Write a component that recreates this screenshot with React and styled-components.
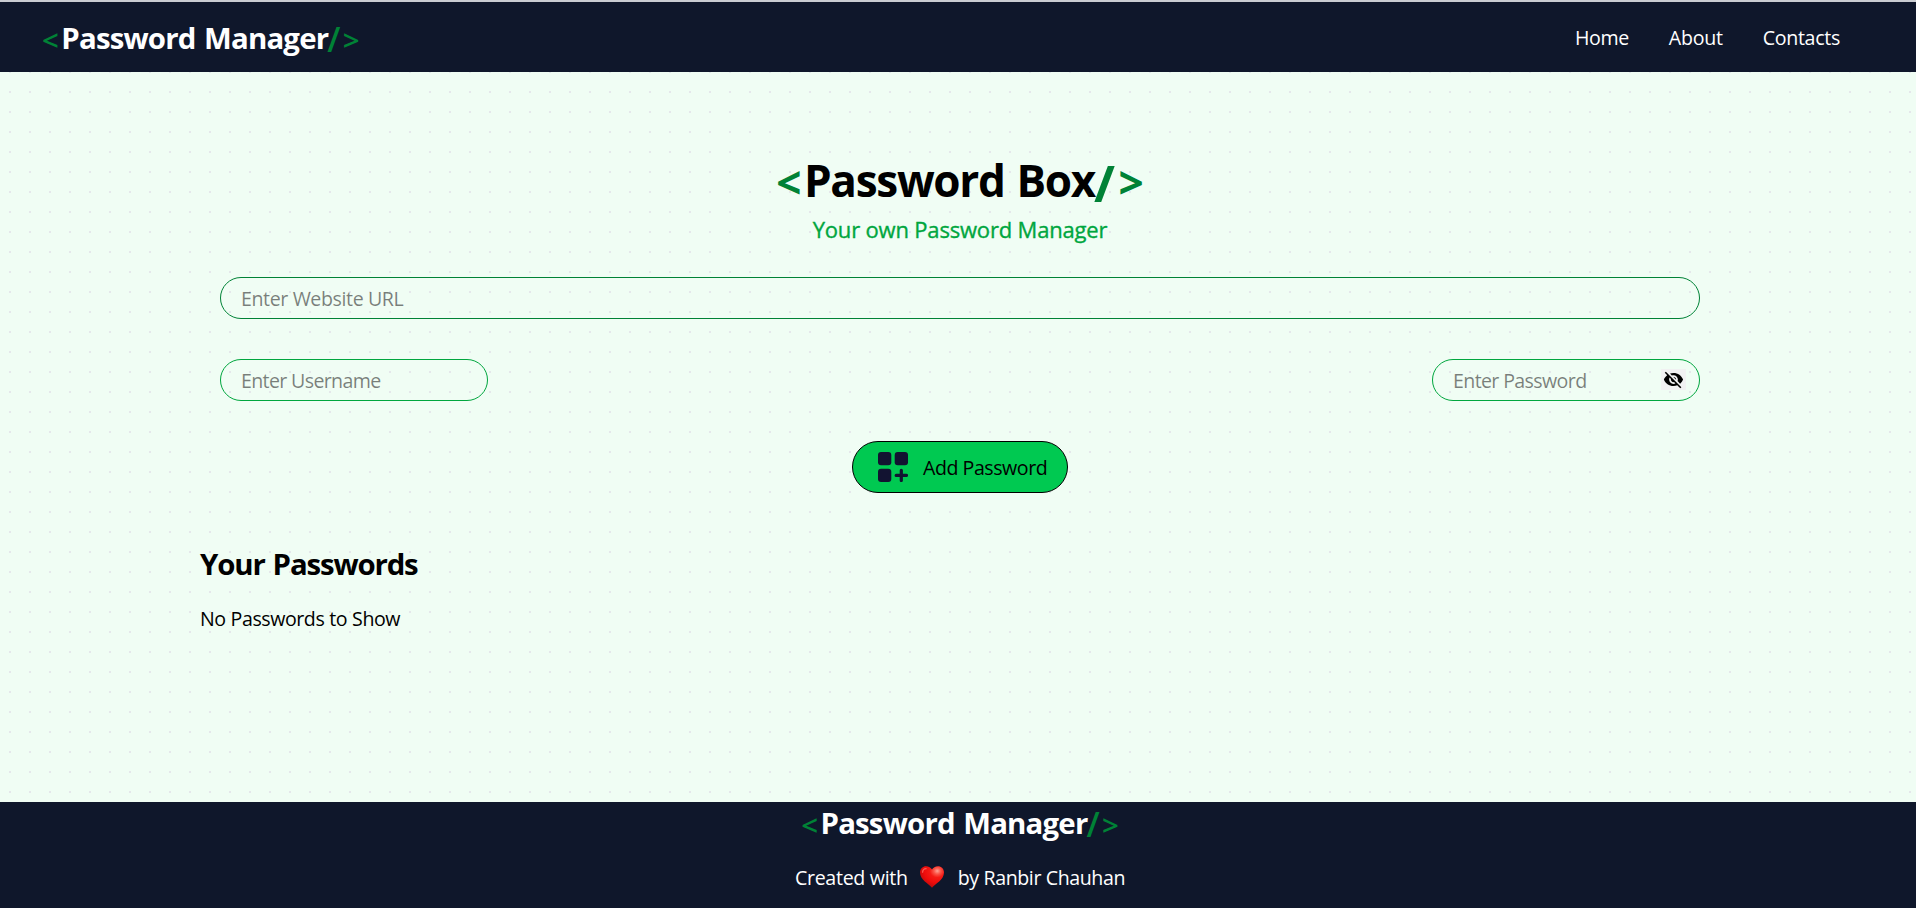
import React from "react";
import styled, { createGlobalStyle } from "styled-components";

const colors = {
  navy: "#0f172b",
  mint: "#f0fdf4",
  green: "#00c951",
  green600: "#00a63e",
  green700: "#008236",
};

const GlobalStyle = createGlobalStyle`
  *, *::before, *::after { box-sizing: border-box; }
  html { overflow: hidden; }
  body {
    margin: 0;
    background: ${colors.mint};
    color: #000;
    font-family: "Segoe UI", "Open Sans", "Noto Sans", sans-serif;
    font-size: 19.6px;
    line-height: 30px;
  }
  h1, h2, p { margin: 0; }
`;

const Page = styled.div`
  display: flex;
  flex-direction: column;
  width: 1920px;
  height: 908px;
  overflow: hidden;
  border-top: 2px solid #c9ccd1;
`;

const Header = styled.header`
  flex: none;
  display: flex;
  align-items: center;
  justify-content: space-between;
  height: 70px;
  padding: 0 80px 0 42px;
  background: ${colors.navy};
  color: #fff;
`;

const Brand = styled.div`
  display: flex;
  align-items: baseline;
  font-size: 29.4px;
  font-weight: 700;
  line-height: 40px;
  padding-top: 1px;
`;

const Name = styled.span`
  letter-spacing: ${(p) => p.$track}px;
  word-spacing: 1.7px;
  margin-right: -1px;
  white-space: nowrap;
`;

const Tag = styled.span`
  color: ${colors.green700};
  font-weight: ${(p) => p.$weight || 700};
  line-height: 0;
  margin-right: ${(p) => p.$gap || 0}em;
  transform: translateY(0.055em);
`;

const Slash = styled(Tag)`
  font-size: 1.15em;
  transform: translateY(0.1em);
`;

const Nav = styled.nav`
  display: flex;
  gap: 40px;
  padding-top: 2px;
`;

const NavLink = styled.a`
  color: inherit;
  text-decoration: none;
  letter-spacing: ${(p) => p.$track}px;
`;

const Main = styled.main`
  flex: 1;
  display: flex;
  flex-direction: column;
  padding: 83px 200px 0;
  background-color: ${colors.mint};
  background-image: conic-gradient(from 90deg at 18px 18px, #e5e7eb 90deg, transparent 0);
  background-size: 20px 20px;
  background-position: -9px 1px;
`;

const Title = styled.h1`
  display: flex;
  align-items: baseline;
  justify-content: center;
  font-size: 44.1px;
  font-weight: 700;
  line-height: 50px;
`;

const Subtitle = styled.p`
  margin-top: 7px;
  text-align: center;
  font-size: 22px;
  font-weight: 500;
  line-height: 35px;
  letter-spacing: -0.18px;
  color: ${colors.green600};
  -webkit-text-stroke: 0.35px ${colors.green600};
`;

const Form = styled.form`
  display: flex;
  flex-direction: column;
  align-items: center;
  gap: 40px;
  padding: 30px 20px 0;
`;

const FieldRow = styled.div`
  display: flex;
  justify-content: space-between;
  width: 100%;
`;

const Field = styled.input`
  width: ${(p) => p.$width};
  height: 42px;
  padding: 0 20px;
  border: 1px solid ${(p) => p.$line};
  border-radius: 21px;
  background: transparent;
  font: inherit;
  letter-spacing: ${(p) => p.$track}px;
  outline: none;
  &::placeholder { color: rgba(0, 0, 0, 0.5); opacity: 1; }
`;

const PasswordWrap = styled.div`
  position: relative;
  width: 268px;
`;

const EyeToggle = styled.span`
  position: absolute;
  top: 10px;
  right: 14px;
  display: flex;
  align-items: center;
  justify-content: center;
  width: 25px;
  height: 21px;
  background: #f1f1f2;
`;

const AddButton = styled.button`
  display: flex;
  align-items: center;
  width: 216px;
  height: 52px;
  padding: 0 0 0 25px;
  gap: 15px;
  border: 1px solid #000;
  border-radius: 26px;
  background: ${colors.green};
  color: #000;
  font: inherit;
  letter-spacing: -0.46px;
  white-space: nowrap;
`;

const ButtonLabel = styled.span`
  padding-top: 2px;
`;

const ListTitle = styled.h2`
  margin-top: 51px;
  font-size: 29.4px;
  font-weight: 700;
  line-height: 40px;
  letter-spacing: -1.15px;
  word-spacing: 1.5px;
`;

const Empty = styled.p`
  margin-top: 20px;
  letter-spacing: -0.44px;
  word-spacing: 0.3px;
`;

const Footer = styled.footer`
  flex: none;
  display: flex;
  flex-direction: column;
  align-items: center;
  height: 106px;
  background: ${colors.navy};
  color: #fff;
`;

const Credit = styled.div`
  display: flex;
  align-items: center;
  margin-top: 20px;
  gap: 12px;
  white-space: nowrap;
`;

const Phrase = styled.span`
  letter-spacing: ${(p) => p.$track}px;
`;

const HeartIcon = styled.svg`
  margin: 0 1px 2px -1px;
`;

const Logo = () => (
  <Brand>
    <Tag $gap={0.085} $weight={600}>&lt;</Tag>
    <Name $track={-0.81}>Password Manager</Name>
    <Slash $gap={0.07} $weight={600}>/</Slash>
    <Tag $weight={600}>&gt;</Tag>
  </Brand>
);

const EyeOff = () => (
  <svg width="21" height="21" viewBox="0 0 24 24" fill="#000">
    <path d="M12 7c2.76 0 5 2.24 5 5 0 .65-.13 1.26-.36 1.83l2.92 2.92c1.51-1.26 2.7-2.89 3.43-4.75-1.73-4.39-6-7.5-11-7.5-1.4 0-2.74.25-3.98.7l2.16 2.16C10.74 7.13 11.35 7 12 7zM2 4.27l2.28 2.28.46.46C3.08 8.3 1.78 10.02 1 12c1.73 4.39 6 7.5 11 7.5 1.55 0 3.03-.3 4.38-.84l.42.42L19.73 22 21 20.73 3.27 3 2 4.27zM7.53 9.8l1.55 1.55c-.05.21-.08.43-.08.65 0 1.66 1.34 3 3 3 .22 0 .44-.03.65-.08l1.55 1.55c-.67.33-1.41.53-2.2.53-2.76 0-5-2.24-5-5 0-.79.2-1.53.53-2.2zm4.31-.78l3.15 3.15.02-.16c0-1.66-1.34-3-3-3l-.17.01z" />
  </svg>
);

const AddIcon = () => (
  <svg width="30" height="30" viewBox="0 0 30 30" fill="#121331">
    <rect width="13.3" height="13.3" rx="3" />
    <rect x="16.7" width="13.3" height="13.3" rx="3" />
    <rect y="16.7" width="13.3" height="13.3" rx="3" />
    <path d="M23.3 18.3v10.2M18.2 23.4h10.3" stroke="#121331" strokeWidth="3.2" strokeLinecap="round" />
  </svg>
);

const Heart = () => (
  <HeartIcon width="26" height="24" viewBox="0 0 26 24">
    <defs>
      <radialGradient id="heartFill" cx="0.72" cy="0.22" r="0.8">
        <stop offset="0" stopColor="#ffa396" />
        <stop offset="0.18" stopColor="#fb5548" />
        <stop offset="0.38" stopColor="#f51a14" />
        <stop offset="0.7" stopColor="#ee0b0b" />
        <stop offset="1" stopColor="#b80c0c" />
      </radialGradient>
    </defs>
    <path d="M13 22.8C9.8 19 1 14.8 1 7.6 1 3.6 3.8 1.2 7 1.2c2.7 0 4.9 1.3 6 3.4 1.1-2.1 3.3-3.4 6-3.4 3.2 0 6 2.4 6 6.4 0 7.200-8.800 11.400-12 15.200z" fill="url(#heartFill)" />
    <path d="M3.6 7.2c.1-2 1.5-3.4 3.5-3.5" fill="none" stroke="#ff7a70" strokeWidth="1.3" strokeLinecap="round" opacity="0.7" />
  </HeartIcon>
);

export default function App() {
  return (
    <Page>
      <GlobalStyle />
      <Header>
        <Logo />
        <Nav>
          <NavLink $track={-0.4}>Home</NavLink>
          <NavLink $track={-0.25}>About</NavLink>
          <NavLink $track={-0.3}>Contacts</NavLink>
        </Nav>
      </Header>
      <Main>
        <Title>
          <Tag $gap={0.055}>&lt;</Tag>
          <Name $track={-1.31}>Password Box</Name>
          <Slash $gap={0.07}>/</Slash>
          <Tag>&gt;</Tag>
        </Title>
        <Subtitle>Your own Password Manager</Subtitle>
        <Form>
          <Field $width="100%" $line={colors.green700} $track={-0.39} placeholder="Enter Website URL" />
          <FieldRow>
            <Field $width="268px" $line={colors.green600} $track={-0.65} placeholder="Enter Username" />
            <PasswordWrap>
              <Field $width="100%" $line={colors.green600} $track={-0.63} placeholder="Enter Password" />
              <EyeToggle>
                <EyeOff />
              </EyeToggle>
            </PasswordWrap>
          </FieldRow>
          <AddButton type="button">
            <AddIcon />
            <ButtonLabel>Add Password</ButtonLabel>
          </AddButton>
        </Form>
        <ListTitle>Your Passwords</ListTitle>
        <Empty>No Passwords to Show</Empty>
      </Main>
      <Footer>
        <Logo />
        <Credit>
          <Phrase $track={-0.3}>Created with</Phrase>
          <Heart />
          <Phrase $track={-0.4}>by Ranbir Chauhan</Phrase>
        </Credit>
      </Footer>
    </Page>
  );
}
